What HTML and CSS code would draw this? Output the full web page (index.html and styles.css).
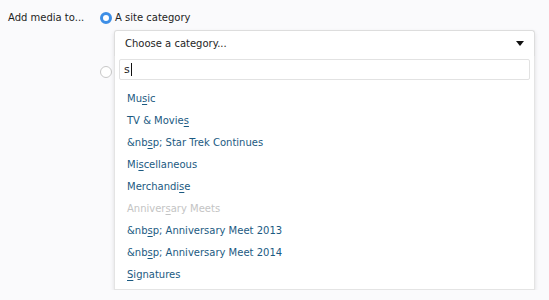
FILE: index.html
```html
<!DOCTYPE html>
<html lang="en">
  <head>
    <meta charset="UTF-8" />
    <title>Add media</title>
    <link rel="stylesheet" href="styles.css">
  </head>
  <body>
    <div class="form-row">
      <div class="label">Add media to...</div>
      <div class="choices">
        <div class="choice">
          <span class="radio checked"></span>
          <span class="choice-text">A site category</span>
        </div>
        <div class="choice second">
          <span class="radio"></span>
          <span class="choice-text">A</span>
        </div>
        <div class="select-wrap">
          <div class="select">
            <span>Choose a category...</span>
            <span class="caret"></span>
          </div>
          <div class="dropdown">
            <div class="search"><span>s</span><span class="cursor"></span></div>
            <ul class="results">
              <li>Mu<u>s</u>ic</li>
              <li>TV &amp; Movie<u>s</u></li>
              <li>&amp;nb<u>s</u>p; Star Trek Continues</li>
              <li>Mi<u>s</u>cellaneous</li>
              <li>Merchandi<u>s</u>e</li>
              <li class="disabled">Anniver<u>s</u>ary Meets</li>
              <li>&amp;nb<u>s</u>p; Anniversary Meet 2013</li>
              <li>&amp;nb<u>s</u>p; Anniversary Meet 2014</li>
              <li><u>S</u>ignatures</li>
            </ul>
          </div>
        </div>
      </div>
    </div>
  </body>
</html>
```

FILE: styles.css
```css
body {
  margin: 0;
  background-color: #fafafc;
  font-family: "DejaVu Sans", Verdana, sans-serif;
  font-size: 10px;
  color: #1e1e1e;
}

.form-row {
  display: flex;
  padding: 10px 0 0 8px;
}

.label {
  width: 92px;
  line-height: 16px;
}

.choices {
  position: relative;
  width: 435px;
}

.choice {
  display: flex;
  align-items: center;
  gap: 3px;
  line-height: 16px;
}

.choice.second {
  position: absolute;
  top: 54px;
  left: 0;
}

.radio {
  width: 12px;
  height: 12px;
  border-radius: 50%;
  border: 1px solid #c8c8c8;
  background: #fff;
  box-sizing: border-box;
}

.radio.checked {
  border: 3px solid #3d8ee6;
}

.select-wrap {
  position: relative;
  margin: 4px 0 0 14px;
  box-shadow: 0 2px 4px rgba(0, 0, 0, 0.12);
  border-radius: 3px;
}

.select {
  display: flex;
  justify-content: space-between;
  align-items: center;
  height: 25px;
  padding: 0 10px;
  background: #fff;
  border: 1px solid #ddd;
  border-bottom: none;
  border-radius: 3px 3px 0 0;
}

.caret {
  width: 0;
  height: 0;
  border-left: 4px solid transparent;
  border-right: 4px solid transparent;
  border-top: 5px solid #111;
}

.dropdown {
  background: #fff;
  border: 1px solid #e4e4e4;
  border-top: none;
  padding: 3px 4px 3px;
}

.search {
  height: 19px;
  border: 1px solid #e2e2e2;
  border-radius: 2px;
  display: flex;
  align-items: center;
  padding-left: 4px;
  font-size: 11px;
}

.cursor {
  width: 1px;
  height: 13px;
  background: #111;
  margin-left: 1px;
}

.results {
  list-style: none;
  margin: 8px 0 0;
  padding: 0;
}

.results li {
  height: 22px;
  line-height: 22px;
  padding-left: 8px;
  color: #1b5a82;
}

.results li.disabled {
  color: #c4c4c4;
}

.results u {
  text-decoration-thickness: 1px;
  text-underline-offset: 2px;
}
```
